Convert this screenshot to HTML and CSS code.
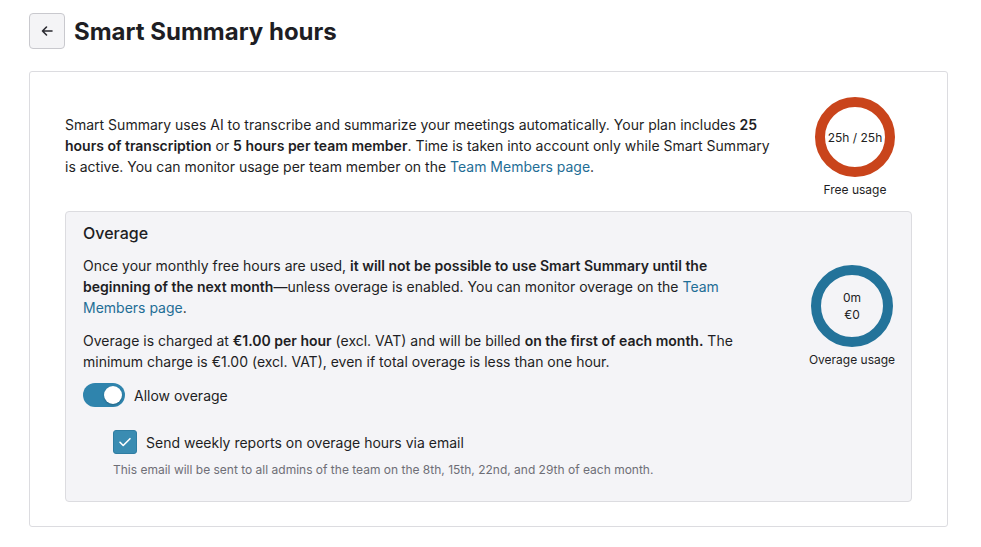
FILE: index.html
```html
<!DOCTYPE html>
<html lang="en">
<head>
    <meta charset="UTF-8">
    <meta name="viewport" content="width=device-width, initial-scale=1.0">
    <title>Smart Summary hours</title>
    <link rel="stylesheet" href="styles.css">
</head>
<body>
    <div class="page">
        <!-- Header -->
        <div class="page-header">
            <button class="back-button" aria-label="Back">
                <svg width="16" height="16" viewBox="0 0 16 16" fill="none" stroke="#2a2a30" stroke-width="1.6" stroke-linecap="round" stroke-linejoin="round">
                    <path d="M13 8H3.5M7.5 4L3.5 8l4 4"/>
                </svg>
            </button>
            <h1>Smart Summary hours</h1>
        </div>

        <!-- Card -->
        <div class="card">
            <div class="intro-row">
                <p class="intro-text">
                    Smart Summary uses AI to transcribe and summarize your meetings automatically. Your plan includes <strong>25 hours of transcription</strong> or <strong>5 hours per team member</strong>. Time is taken into account only while Smart Summary is active. You can monitor usage per team member on the <a href="#">Team Members page</a>.
                </p>
                <div class="usage usage-free">
                    <div class="donut donut-orange">
                        <span>25h / 25h</span>
                    </div>
                    <div class="usage-label">Free usage</div>
                </div>
            </div>

            <div class="overage-box">
                <h2>Overage</h2>
                <div class="overage-row">
                    <div class="overage-text">
                        <p>Once your monthly free hours are used, <strong>it will not be possible to use Smart Summary until the beginning of the next month</strong>—unless overage is enabled. You can monitor overage on the <a href="#">Team Members page</a>.</p>
                        <p>Overage is charged at <strong>€1.00 per hour</strong> (excl. VAT) and will be billed <strong>on the first of each month.</strong> The minimum charge is €1.00 (excl. VAT), even if total overage is less than one hour.</p>
                    </div>
                    <div class="usage usage-overage">
                        <div class="donut donut-blue">
                            <span>0m<br>€0</span>
                        </div>
                        <div class="usage-label">Overage usage</div>
                    </div>
                </div>

                <label class="toggle-row">
                    <span class="toggle"><span class="toggle-knob"></span></span>
                    Allow overage
                </label>

                <div class="email-option">
                    <label class="check-row">
                        <span class="checkbox">
                            <svg width="16" height="16" viewBox="0 0 16 16" fill="none" stroke="#fff" stroke-width="1.6" stroke-linecap="round" stroke-linejoin="round">
                                <path d="M3 8.3l3.2 3.2L13 4.7"/>
                            </svg>
                        </span>
                        Send weekly reports on overage hours via email
                    </label>
                    <div class="hint">This email will be sent to all admins of the team on the 8th, 15th, 22nd, and 29th of each month.</div>
                </div>
            </div>
        </div>
    </div>
</body>
</html>
```

FILE: styles.css
```css
body {
    font-family: Inter, "Noto Sans", Arial, sans-serif;
    background-color: #ffffff;
    color: #1e1e24;
    margin: 0;
}
.page {
    padding: 13px 33px 20px 29px;
}
.page-header {
    display: flex;
    align-items: center;
    gap: 9px;
    margin-bottom: 22px;
}
.back-button {
    width: 36px;
    height: 36px;
    display: flex;
    align-items: center;
    justify-content: center;
    background-color: #f4f4f6;
    border: 1px solid #c9c9ce;
    border-radius: 4px;
    padding: 0;
    cursor: pointer;
}
h1 {
    font-size: 24px;
    font-weight: 700;
    margin: 0;
}
.card {
    border: 1px solid #dcdce0;
    border-radius: 3px;
    padding: 25px 35px 24px 35px;
}
.intro-row {
    display: flex;
    align-items: flex-start;
    justify-content: space-between;
    gap: 20px;
}
.intro-text {
    margin: 17px 0 0 0;
    font-size: 14px;
    line-height: 21px;
    width: 712px;
}
a {
    color: #1f6e96;
    text-decoration: none;
}
strong {
    font-weight: 600;
}
.usage {
    display: flex;
    flex-direction: column;
    align-items: center;
    width: 114px;
}
.donut {
    width: 80px;
    height: 80px;
    box-sizing: border-box;
    border-radius: 50%;
    border: 10px solid;
    display: flex;
    align-items: center;
    justify-content: center;
    text-align: center;
    font-size: 12px;
    line-height: 17px;
    color: #222;
}
.donut-orange {
    border-color: #c9441b;
}
.donut-blue {
    border-color: #23739a;
    width: 82px;
    height: 82px;
}
.usage-label {
    font-size: 12px;
    margin-top: 5px;
    line-height: 16px;
    white-space: nowrap;
}
.overage-box {
    margin-top: 13px;
    background-color: #f4f4f7;
    border: 1px solid #dcdce0;
    border-radius: 4px;
    padding: 10px 18px 22px 17px;
}
h2 {
    font-size: 16px;
    font-weight: 500;
    line-height: 22px;
    margin: 0 0 11px 0;
}
.overage-row {
    display: flex;
    align-items: center;
    justify-content: space-between;
}
.overage-text {
    width: 670px;
    font-size: 14px;
    line-height: 21px;
}
.overage-text p {
    margin: 0 0 12px 0;
}
.overage-text p:last-child {
    margin-bottom: 0;
}
.usage-overage {
    width: 82px;
    margin-top: 6px;
}
.toggle-row {
    display: flex;
    align-items: center;
    gap: 9px;
    font-size: 14px;
    margin-top: 11px;
}
.toggle {
    width: 42px;
    height: 24px;
    border-radius: 12px;
    background-color: #2f84ad;
    position: relative;
}
.toggle-knob {
    position: absolute;
    top: 3px;
    right: 3px;
    width: 18px;
    height: 18px;
    border-radius: 50%;
    background-color: #fff;
    box-shadow: 0 1px 2px rgba(0, 0, 0, 0.25);
}
.email-option {
    padding-left: 30px;
    margin-top: 23px;
}
.check-row {
    display: flex;
    align-items: center;
    gap: 9px;
    font-size: 14px;
}
.checkbox {
    width: 24px;
    height: 24px;
    box-sizing: border-box;
    border-radius: 3px;
    background-color: #3a8cb2;
    border: 1px solid #2f7da2;
    display: flex;
    align-items: center;
    justify-content: center;
}
.hint {
    font-size: 12px;
    color: #6e6e76;
    line-height: 18px;
    margin-top: 7px;
}
```
